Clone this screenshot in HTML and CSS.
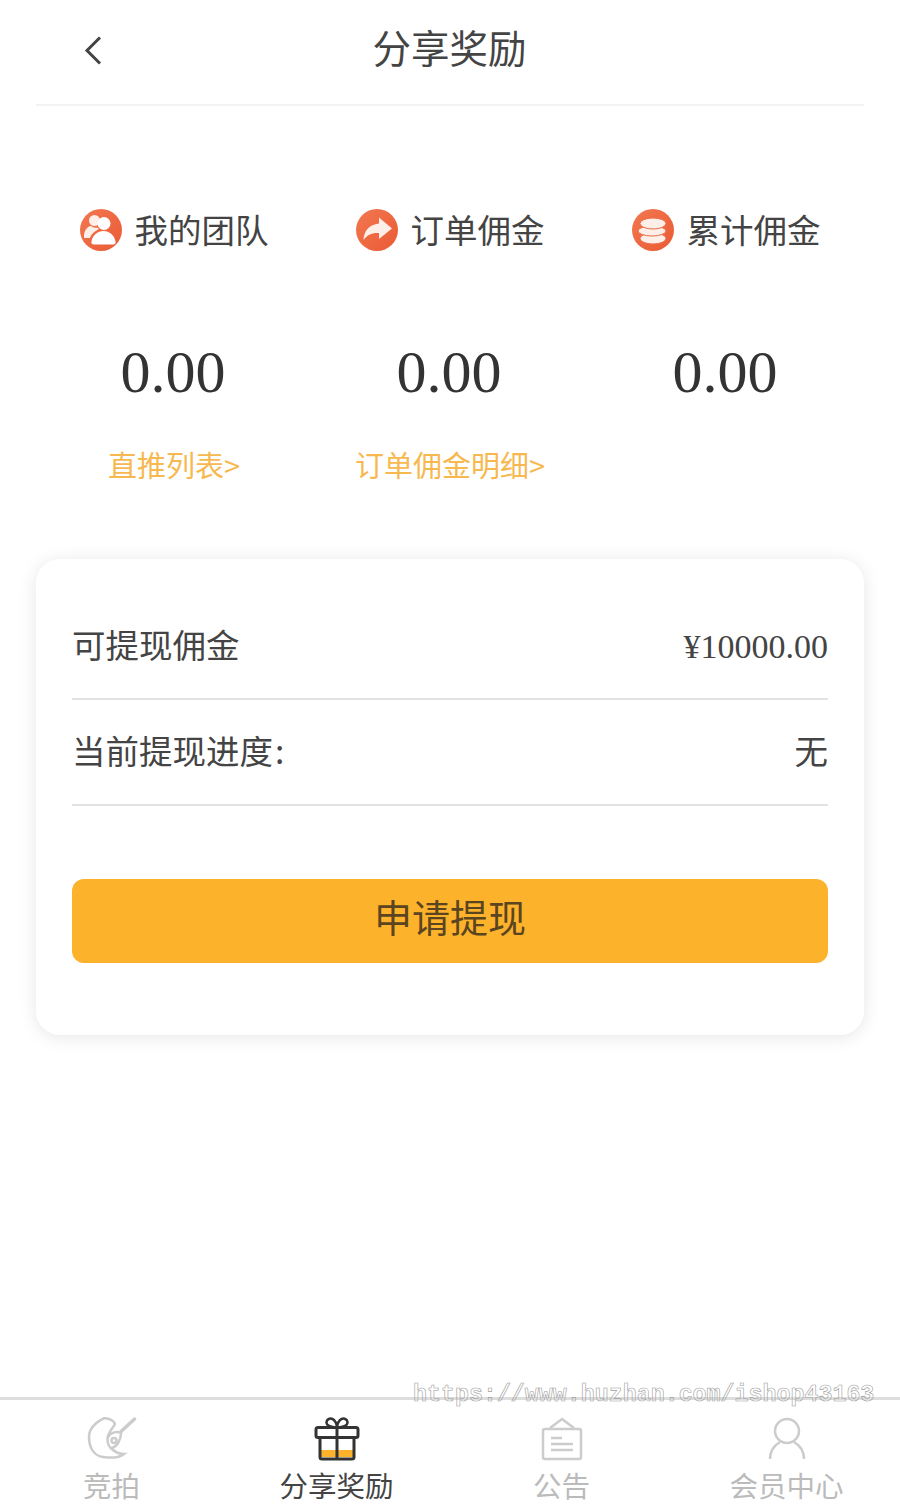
FILE: index.html
```html
<!DOCTYPE html>
<html lang="zh-CN">
  <head>
    <meta charset="UTF-8" />
    <meta name="viewport" content="width=device-width, initial-scale=1.0" />
    <title>分享奖励</title>
    <link rel="stylesheet" href="styles.css">
  </head>
  <body>
    <div class="page">
      <header class="topbar">
        <svg class="back" viewBox="0 0 20 30" fill="none" stroke="#444" stroke-width="3">
          <path d="M17 2.500 L4 15.500 L17 28.500" />
        </svg>
        <h1>分享奖励</h1>
      </header>

      <section class="stats">
        <div class="stat">
          <div class="stat-label">
            <svg class="stat-icon" viewBox="0 0 42 42">
              <defs>
                <linearGradient id="org" x1="0" y1="0" x2="1" y2="1">
                  <stop offset="0" stop-color="#f27850" />
                  <stop offset="1" stop-color="#ea5a34" />
                </linearGradient>
              </defs>
              <circle cx="21" cy="21" r="21" fill="url(#org)" />
              <circle cx="14.500" cy="11.500" r="5.500" fill="#fdeee8" />
              <path d="M4 29c-.5-7 3-11.500 7-12 2 1.500 4 2 6 1.500 1 .5 1.500 1 2 1.500-4 2-8 5-9 9z" fill="#fdeee8" />
              <circle cx="24" cy="14.500" r="6.500" fill="#fff" />
              <path d="M14 35.500c-2 0-3-1-2.500-3 1-6 6-10.500 12-10.500s11 4.500 12 10.500c.5 2-.5 3-2.500 3z" fill="#fff" />
            </svg>
            <span>我的团队</span>
          </div>
          <div class="stat-value">0.00</div>
          <a class="stat-link">直推列表&gt;</a>
        </div>
        <div class="stat">
          <div class="stat-label">
            <svg class="stat-icon" viewBox="0 0 42 42">
              <circle cx="21" cy="21" r="21" fill="url(#org)" />
              <path d="M23 8.500 L36 19.500 L23 30 V24 C16 23.500 11 26 7.500 31 C8 22 13 15.500 23 14.500z" fill="#fdeee8" />
            </svg>
            <span>订单佣金</span>
          </div>
          <div class="stat-value">0.00</div>
          <a class="stat-link">订单佣金明细&gt;</a>
        </div>
        <div class="stat">
          <div class="stat-label">
            <svg class="stat-icon" viewBox="0 0 42 42">
              <circle cx="21" cy="21" r="21" fill="url(#org)" />
              <rect x="8" y="24" width="26" height="11" rx="13" ry="5.500" fill="#fdeee8" stroke="#ee6a44" />
              <rect x="6" y="17" width="28" height="10" rx="14" ry="5" fill="#fdeee8" stroke="#ee6a44" />
              <rect x="8" y="9" width="26" height="11" rx="13" ry="5.500" fill="#fdeee8" stroke="#ee6a44" />
            </svg>
            <span>累计佣金</span>
          </div>
          <div class="stat-value">0.00</div>
        </div>
      </section>

      <section class="card">
        <div class="row">
          <span>可提现佣金</span>
          <span class="money">¥10000.00</span>
        </div>
        <div class="row">
          <span>当前提现进度&#8202;:</span>
          <span>无</span>
        </div>
        <button class="apply">申请提现</button>
      </section>

      <nav class="tabbar">
        <a class="tab">
          <svg class="tab-icon" viewBox="0 0 50 44" fill="none" stroke="#ccc" stroke-width="2.500" stroke-linecap="round">
            <path d="M17.500 1 C7 6 2 12 2 20 C2 32 8 39 16 40 C23 41 32 41 37 37 C32 37 28 35 25 32" />
            <path d="M17.500 1 C24 2 29 5 27.500 8 C24 13 20 17 20.500 23 C21 28 23 31 25 32" />
            <path d="M21 20 C24 15 30 14 34 16 C34 23 30 30 24 31" />
            <circle cx="27" cy="23.500" r="2.500" />
            <path d="M34 14.500 L47.500 2" stroke-width="3.500" />
          </svg>
          <span>竞拍</span>
        </a>
        <a class="tab active">
          <svg class="tab-icon" viewBox="0 0 46 44" fill="none" stroke="#333" stroke-width="3" stroke-linejoin="round">
            <path d="M7 33 H39 V40 H7z" fill="#fdb22b" stroke="none" />
            <path d="M6 21 V40 A2 2 0 0 0 8 42 H38 A2 2 0 0 0 40 40 V21" />
            <rect x="2" y="10.500" width="42" height="10" rx="2" />
            <path d="M23 10.500 V42" />
            <path d="M23 10.500 C16 10.500 12 8 12.500 5 C13 2 16 1 18.500 2 C21 3 23 7 23 10.500 C23 7 25 3 27.500 2 C30 1 33 2 33.500 5 C34 8 30 10.500 23 10.500z" stroke-width="2.500" />
          </svg>
          <span>分享奖励</span>
        </a>
        <a class="tab">
          <svg class="tab-icon" viewBox="0 0 44 44" fill="none" stroke="#ccc" stroke-width="2.500">
            <path d="M10 11 L22 2 L34 11" />
            <rect x="3" y="12" width="38" height="30" rx="2" />
            <path d="M11 21 H22 M11 27 H33 M11 33 H33" />
          </svg>
          <span>公告</span>
        </a>
        <a class="tab">
          <svg class="tab-icon" viewBox="0 0 40 44" fill="none" stroke="#ccc" stroke-width="2.500">
            <circle cx="20" cy="14" r="12" />
            <path d="M3 42 C3 33 8 28 13 25 M37 42 C37 33 32 28 27 25" />
          </svg>
          <span>会员中心</span>
        </a>
      </nav>

      <div class="watermark">https://www.huzhan.com/ishop43163</div>
    </div>
  </body>
</html>
```

FILE: styles.css
```css
* {
  margin: 0;
  padding: 0;
  box-sizing: border-box;
}
body {
  background-color: #fff;
  font-family: "Noto Sans CJK SC", "Liberation Sans", sans-serif;
  color: #444;
}
.page {
  position: relative;
  height: 1509px;
  display: flex;
  flex-direction: column;
  overflow: hidden;
}
.topbar {
  position: relative;
  height: 106px;
  margin: 0 36px;
  padding-bottom: 11px;
  padding-right: 1px;
  display: flex;
  justify-content: center;
  align-items: center;
  border-bottom: 2px solid #f3f3f3;
}
.topbar h1 {
  font-size: 38.500px;
  font-weight: 400;
  line-height: 1;
  color: #444;
}
.back {
  position: absolute;
  left: 47px;
  top: 35px;
  width: 20px;
  height: 30px;
}
.stats {
  margin: 101px 36px 0;
  display: grid;
  grid-template-columns: repeat(3, 1fr);
  height: 352px;
}
.stat {
  display: flex;
  flex-direction: column;
  align-items: center;
}
.stat-label {
  display: flex;
  align-items: center;
  gap: 13px;
  height: 44px;
  font-size: 33.500px;
  line-height: 44px;
}
.stat-icon {
  width: 42px;
  height: 42px;
  margin-top: 2px;
}
.stat-value {
  margin-top: 86px;
  padding-right: 2px;
  font-family: "Liberation Serif", serif;
  font-size: 60px;
  line-height: 70px;
  color: #333;
}
.stat-link {
  margin-top: 37px;
  font-size: 29px;
  line-height: 40px;
  color: #f7b94f;
}
.card {
  margin: 0 36px;
  height: 476px;
  padding: 35px 36px 0;
  background-color: #fff;
  border-radius: 24px;
  box-shadow: 0 2px 18px rgba(0, 0, 0, 0.1);
}
.row {
  height: 106px;
  padding-bottom: 5px;
  display: flex;
  justify-content: space-between;
  align-items: center;
  border-bottom: 2px solid #e2e2e2;
  font-size: 33.500px;
}
.money {
  padding-top: 6px;
  font-family: "Liberation Serif", serif;
  font-size: 34px;
}
.apply {
  display: block;
  width: 100%;
  height: 84px;
  margin-top: 73px;
  padding-bottom: 12px;
  border: none;
  border-radius: 12px;
  background-color: #fdb22b;
  color: #5a4520;
  font-family: inherit;
  font-size: 38px;
}
.tabbar {
  margin-top: auto;
  height: 112px;
  display: grid;
  grid-template-columns: repeat(4, 1fr);
  border-top: 3px solid #ddd;
}
.tab {
  display: flex;
  flex-direction: column;
  align-items: center;
  gap: 6px;
  padding-top: 17px;
  padding-right: 2px;
  font-size: 28.500px;
  line-height: 36px;
  color: #bbb;
}
.tab.active {
  color: #444;
}
.tab-icon {
  height: 44px;
  width: 50px;
}
.watermark {
  position: absolute;
  left: 413px;
  top: 1381px;
  font-family: "Liberation Mono", monospace;
  font-size: 23.300px;
  font-weight: 700;
  line-height: 28px;
  white-space: nowrap;
  color: transparent;
  opacity: 0.99;
  -webkit-text-stroke: 0.6px #a0a0a0;
}
```
